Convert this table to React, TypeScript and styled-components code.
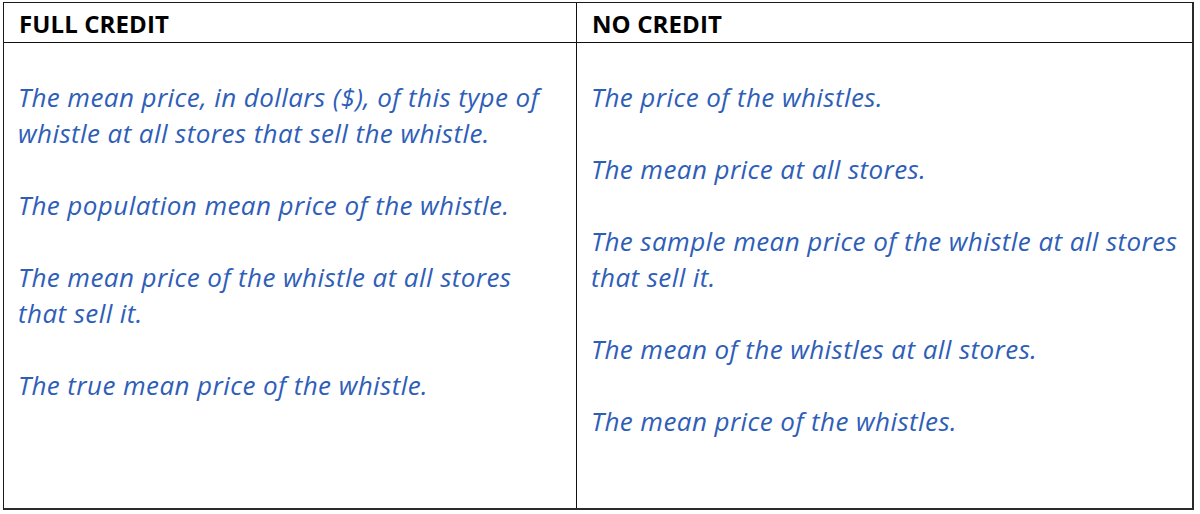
import React from "react";
import styled, { createGlobalStyle } from "styled-components";

const GlobalStyle = createGlobalStyle`
  html, body { margin: 0; padding: 0; background: #ffffff; }
  body { font-family: "Open Sans", Lato, sans-serif; }
`;

const Page = styled.div`
  width: 1200px;
  height: 514px;
  padding: 2px 0 0 3px;
  box-sizing: border-box;
  background: #ffffff;
`;

const Table = styled.div`
  width: 1191px;
  height: 508px;
  box-sizing: border-box;
  display: grid;
  grid-template-columns: 573px 1fr;
  grid-template-rows: 40px 1fr;
  border-top: 1px solid #1a1a1a;
  border-left: 1px solid #1a1a1a;
  border-right: 2px solid #2b2b2b;
  border-bottom: 2px solid #2b2b2b;
`;

const HeaderCell = styled.div<{ $last?: boolean }>`
  border-bottom: 1px solid #111;
  border-right: ${(p) => (p.$last ? "none" : "1px solid #111")};
  padding: 2px 0 0 15px;
  font-family: "Open Sans", Lato, sans-serif;
  font-weight: 700;
  font-size: 24px;
  letter-spacing: 0.1px;
  line-height: 40px;
  color: #000;
  display: flex;
  align-items: center;
  box-sizing: border-box;
`;

const BodyCell = styled.div<{ $last?: boolean }>`
  border-right: ${(p) => (p.$last ? "none" : "1px solid #111")};
  padding: 36px 0 0 14px;
  box-sizing: border-box;
  display: flex;
  flex-direction: column;
  gap: 36px;
`;

const Answer = styled.p`
  margin: 0;
  font-family: "Open Sans", Lato, sans-serif;
  font-style: italic;
  font-weight: 500;
  font-size: 26px;
  letter-spacing: 0.42px;
  line-height: 36px;
  color: #2e5eb8;
  white-space: nowrap;
`;

const full = [
  ["The mean price, in dollars ($), of this type of", "whistle at all stores that sell the whistle."],
  ["The population mean price of the whistle."],
  ["The mean price of the whistle at all stores", "that sell it."],
  ["The true mean price of the whistle."],
];

const none = [
  ["The price of the whistles."],
  ["The mean price at all stores."],
  ["The sample mean price of the whistle at all stores", "that sell it."],
  ["The mean of the whistles at all stores."],
  ["The mean price of the whistles."],
];

const renderLines = (lines: string[]) =>
  lines.map((l, i) => (
    <React.Fragment key={i}>
      {i > 0 && <br />}
      {l}
    </React.Fragment>
  ));

export default function App() {
  return (
    <Page>
      <GlobalStyle />
      <Table>
        <HeaderCell>FULL CREDIT</HeaderCell>
        <HeaderCell $last>NO CREDIT</HeaderCell>
        <BodyCell>
          {full.map((p, i) => (
            <Answer key={i}>{renderLines(p)}</Answer>
          ))}
        </BodyCell>
        <BodyCell $last>
          {none.map((p, i) => (
            <Answer key={i}>{renderLines(p)}</Answer>
          ))}
        </BodyCell>
      </Table>
    </Page>
  );
}
